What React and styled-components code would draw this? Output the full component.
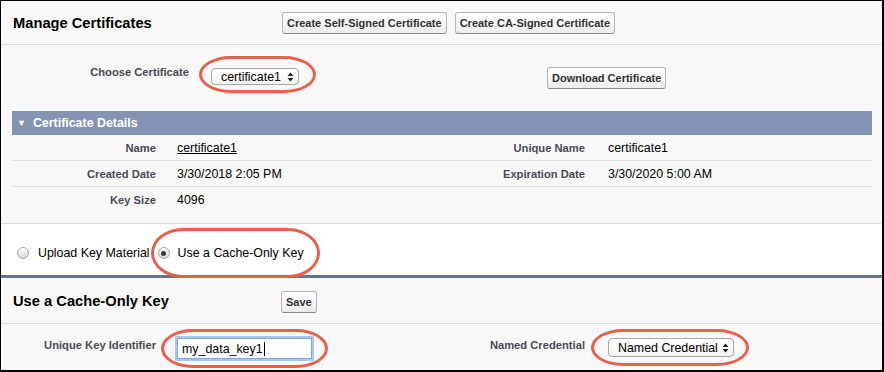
import React from 'react';
import styled, { createGlobalStyle } from 'styled-components';

const Global = createGlobalStyle`
  html, body { margin: 0; padding: 0; background: #fff; }
  body { font-family: "Liberation Sans", Arial, Helvetica, sans-serif; }
  * { box-sizing: border-box; }
`;

const Frame = styled.div`
  width: 884px;
  height: 372px;
  border-style: solid;
  border-color: #000;
  border-width: 1px 2px 2px 1px;
  background: #f8f8f8;
  display: flex;
  flex-direction: column;
  overflow: hidden;
`;

const PageHeader = styled.div`
  height: ${p => p.$h}px;
  flex: none;
  border-bottom: 1px solid #dcdcdc;
  display: flex;
  align-items: center;
  padding-left: 12px;
`;

const Title = styled.h2`
  margin: 0;
  width: ${p => p.$w}px;
  font-size: 14.7px;
  font-weight: bold;
  color: #000;
  flex: none;
`;

const ButtonGroup = styled.div`
  display: flex;
  gap: 8px;
  margin-top: ${p => p.$mt ?? 0}px;
`;

const Button = styled.button`
  font-family: "Liberation Sans", Arial, Helvetica, sans-serif;
  font-weight: bold;
  font-size: 11px;
  color: #333;
  height: 22px;
  padding: 0 4px;
  border: 1px solid #b5b5b5;
  border-bottom-color: #8a8a8a;
  border-radius: 3px;
  background: linear-gradient(#ffffff, #ececec);
  cursor: pointer;
  white-space: nowrap;
`;

const MainSection = styled.div`
  flex: none;
  height: 179px;
  border-bottom: 1px solid #dcdcdc;
`;

const ChooseRow = styled.div`
  display: grid;
  grid-template-columns: 198px 348px auto;
  align-items: start;
  padding-top: 20px;
  height: 66px;
`;

const Label = styled.div`
  font-size: 11.2px;
  font-weight: bold;
  color: #4a4a56;
  text-align: right;
  line-height: 14px;
  padding-right: ${p => p.$pr ?? 10}px;
  padding-top: ${p => p.$pt ?? 0}px;
  white-space: nowrap;
`;

const DataCell = styled.div`
  padding-left: ${p => p.$pl ?? 11}px;
  padding-top: ${p => p.$pt ?? 0}px;
  font-size: 12.4px;
  color: #000;
  white-space: nowrap;
`;

const Circled = styled.span`
  position: relative;
  display: inline-flex;
  align-items: center;
  &::after {
    content: "";
    position: absolute;
    left: ${p => -p.$l}px;
    right: ${p => -p.$r}px;
    top: ${p => -p.$t}px;
    bottom: ${p => -p.$b}px;
    border: 3px solid #e85f4b;
    border-radius: 32px / 50%;
    pointer-events: none;
  }
`;

const SelectBox = styled.span`
  display: inline-flex;
  align-items: center;
  justify-content: space-between;
  width: ${p => p.$w}px;
  height: ${p => p.$h}px;
  padding: 0 4px 0 9px;
  border: 1px solid #a8a8a8;
  border-radius: 4px;
  background: linear-gradient(#ffffff, #f3f3f3);
  font-size: 12.4px;
  color: #000;
`;

const Arrows = () => (
  <svg width="7" height="10" viewBox="0 0 7 10">
    <path d="M3.5 0.5 L6.5 4 L0.5 4 Z" fill="#222" />
    <path d="M3.5 9.5 L6.5 6 L0.5 6 Z" fill="#222" />
  </svg>
);

const Select = ({ w, h, children }) => (
  <SelectBox $w={w} $h={h}>
    <span>{children}</span>
    <Arrows />
  </SelectBox>
);

const DetailBlock = styled.div`
  margin: 0 10px 0 11px;
`;

const DetailBar = styled.div`
  height: 24px;
  background: #8394b5;
  color: #fff;
  font-weight: bold;
  font-size: 12.4px;
  display: flex;
  align-items: center;
  padding-left: 5px;
  gap: 7px;
`;

const Tri = styled.span`
  font-size: 9px;
  line-height: 1;
`;

const DetailRow = styled.div`
  display: grid;
  grid-template-columns: 154px 275px 155px 1fr;
  align-items: center;
  height: 26px;
  border-bottom: 1px solid ${p => (p.$last ? 'transparent' : '#e2e2e2')};
`;

const Link = styled.span`
  text-decoration: underline;
  color: #000;
`;

const RadioRow = styled.div`
  flex: none;
  height: 51px;
  background: #fff;
  display: flex;
  align-items: center;
  padding: 7px 0 0 16px;
  font-size: 12.4px;
  color: #000;
`;

const RadioItem = styled.label`
  display: inline-flex;
  align-items: center;
  gap: ${p => p.$gap ?? 9}px;
  margin-right: ${p => p.$mr ?? 0}px;
`;

const RadioDot = styled.span`
  width: 12px;
  height: 12px;
  border-radius: 50%;
  border: 1px solid #a6a6a6;
  background: linear-gradient(#ffffff, #d9d9d9);
  display: inline-flex;
  align-items: center;
  justify-content: center;
  &::after {
    content: "";
    width: 5px;
    height: 5px;
    border-radius: 50%;
    background: ${p => (p.$on ? '#3a3a3a' : 'transparent')};
  }
`;

const DarkRule = styled.div`
  flex: none;
  height: 3px;
  background: #68738d;
`;

const FormRow = styled.div`
  flex: 1;
  display: grid;
  grid-template-columns: 154px 275px 155px 1fr;
  align-items: start;
  margin-left: 11px;
  padding-top: 14px;
`;

const InputBox = styled.span`
  display: inline-flex;
  align-items: center;
  width: 135px;
  height: 21px;
  padding-left: 4px;
  background: #fff;
  border: 1px solid #7ea6d9;
  box-shadow: 0 0 0 2px #a9c8ee;
  font-size: 12.4px;
  color: #000;
`;

const Caret = styled.span`
  display: inline-block;
  width: 1px;
  height: 14px;
  background: #000;
  margin-left: 1px;
`;

export default function App() {
  return (
    <>
      <Global />
      <Frame>
        <PageHeader $h={44}>
          <Title $w={269}>Manage Certificates</Title>
          <ButtonGroup>
            <Button>Create Self-Signed Certificate</Button>
            <Button>Create CA-Signed Certificate</Button>
          </ButtonGroup>
        </PageHeader>

        <MainSection>
          <ChooseRow>
            <Label>Choose Certificate</Label>
            <DataCell $pl={12} $pt={3}>
              <Circled $l={12} $r={17} $t={12} $b={8}>
                <Select w={88} h={17}>certificate1</Select>
              </Circled>
            </DataCell>
            <DataCell $pl={0} $pt={2}>
              <Button>Download Certificate</Button>
            </DataCell>
          </ChooseRow>

          <DetailBlock>
            <DetailBar>
              <Tri>▼</Tri>
              <span>Certificate Details</span>
            </DetailBar>
            <DetailRow>
              <Label>Name</Label>
              <DataCell><Link>certificate1</Link></DataCell>
              <Label $pr={11}>Unique Name</Label>
              <DataCell $pl={12}>certificate1</DataCell>
            </DetailRow>
            <DetailRow>
              <Label>Created Date</Label>
              <DataCell>3/30/2018 2:05 PM</DataCell>
              <Label $pr={11}>Expiration Date</Label>
              <DataCell $pl={12}>3/30/2020 5:00 AM</DataCell>
            </DetailRow>
            <DetailRow $last>
              <Label>Key Size</Label>
              <DataCell>4096</DataCell>
              <div />
              <div />
            </DetailRow>
          </DetailBlock>
        </MainSection>

        <RadioRow>
          <RadioItem $mr={8}>
            <RadioDot />
            <span>Upload Key Material</span>
          </RadioItem>
          <Circled $l={7} $r={16} $t={18} $b={18}>
            <RadioItem $gap={8}>
              <RadioDot $on />
              <span>Use a Cache-Only Key</span>
            </RadioItem>
          </Circled>
        </RadioRow>

        <DarkRule />

        <PageHeader $h={46}>
          <Title $w={268}>Use a Cache-Only Key</Title>
          <ButtonGroup $mt={3}>
            <Button>Save</Button>
          </ButtonGroup>
        </PageHeader>

        <FormRow>
          <Label>Unique Key Identifier</Label>
          <DataCell $pt={-1}>
            <Circled $l={16} $r={16} $t={9} $b={9}>
              <InputBox>
                my_data_key1<Caret />
              </InputBox>
            </Circled>
          </DataCell>
          <Label $pr={11}>Named Credential</Label>
          <DataCell $pl={12}>
            <Circled $l={17} $r={15} $t={9} $b={9}>
              <Select w={126} h={19}>Named Credential</Select>
            </Circled>
          </DataCell>
        </FormRow>
      </Frame>
    </>
  );
}
